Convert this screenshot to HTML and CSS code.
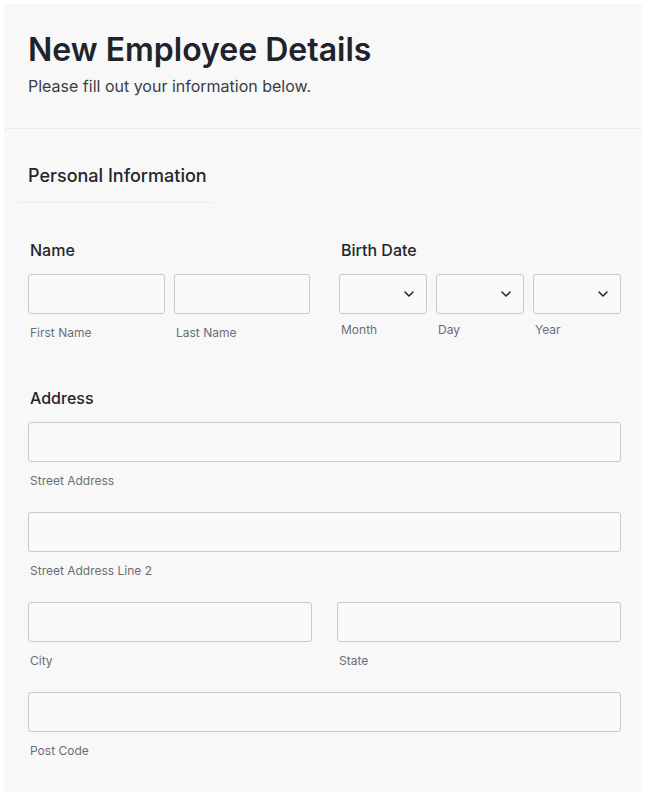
FILE: index.html
```html
<!DOCTYPE html>
<html lang="en">
<head>
<meta charset="utf-8">
<title>New Employee Details</title>
<link rel="stylesheet" href="styles.css">
</head>
<body>
<div class="page">
  <div class="card">
    <header class="head">
      <h1 class="title">New Employee Details</h1>
      <p class="subtitle">Please fill out your information below.</p>
    </header>
    <section class="section">
      <div class="section-head">
        <h2 class="section-title">Personal Information</h2>
      </div>
      <div class="form">
        <div class="pair">
          <div class="group">
            <div class="label">Name</div>
            <div class="inputs two">
              <div class="field">
                <input class="input" type="text">
                <span class="sub">First Name</span>
              </div>
              <div class="field">
                <input class="input" type="text">
                <span class="sub">Last Name</span>
              </div>
            </div>
          </div>
          <div class="group">
            <div class="label">Birth Date</div>
            <div class="inputs three">
              <div class="field">
                <div class="select"><svg class="chev" viewBox="0 0 10 6" width="10" height="6"><path d="M1 1l4 4 4-4" fill="none" stroke="#2a2c33" stroke-width="1.6" stroke-linecap="round" stroke-linejoin="round"/></svg></div>
                <span class="sub sub-tight">Month</span>
              </div>
              <div class="field">
                <div class="select"><svg class="chev" viewBox="0 0 10 6" width="10" height="6"><path d="M1 1l4 4 4-4" fill="none" stroke="#2a2c33" stroke-width="1.6" stroke-linecap="round" stroke-linejoin="round"/></svg></div>
                <span class="sub sub-tight">Day</span>
              </div>
              <div class="field">
                <div class="select"><svg class="chev" viewBox="0 0 10 6" width="10" height="6"><path d="M1 1l4 4 4-4" fill="none" stroke="#2a2c33" stroke-width="1.6" stroke-linecap="round" stroke-linejoin="round"/></svg></div>
                <span class="sub sub-tight">Year</span>
              </div>
            </div>
          </div>
        </div>

        <div class="group address">
          <div class="label">Address</div>
          <div class="field">
            <input class="input" type="text">
            <span class="sub">Street Address</span>
          </div>
          <div class="field spaced">
            <input class="input" type="text">
            <span class="sub">Street Address Line 2</span>
          </div>
          <div class="city-state spaced">
            <div class="field">
              <input class="input" type="text">
              <span class="sub">City</span>
            </div>
            <div class="field">
              <input class="input" type="text">
              <span class="sub">State</span>
            </div>
          </div>
          <div class="field spaced">
            <input class="input" type="text">
            <span class="sub">Post Code</span>
          </div>
        </div>
      </div>
    </section>
  </div>
</div>
</body>
</html>
```
FILE: styles.css
```css
* { box-sizing: border-box; }
html, body { margin: 0; padding: 0; background: #ffffff; }
body { font-family: Inter, "Noto Sans", sans-serif; color: #23262e; }

.page { padding: 4px 8px 8px 4px; }

.card {
  background: #f8f8f8;
  border-radius: 3px;
  height: 788px;
}

.head {
  padding: 27px 24px 32px 24px;
  border-bottom: 1px solid #ececec;
}
.title {
  margin: 0;
  font-size: 32px;
  line-height: 38px;
  font-weight: 600;
  color: #20232b;
  letter-spacing: 0;
}
.subtitle {
  margin: 7px 0 0 0;
  font-size: 16px;
  line-height: 20px;
  color: #3a3d45;
}

.section { padding: 0; }
.section-head {
  margin: 0 0 0 14px;
  width: 194px;
  padding: 36px 0 15px 10px;
  border-bottom: 1px solid #ebebeb;
}
.section-title {
  margin: 0;
  font-size: 18px;
  line-height: 22px;
  font-weight: 500;
  color: #23262e;
}

.form {
  margin-left: 24px;
  width: 593px;
  padding-top: 37px;
}

.pair {
  display: grid;
  grid-template-columns: 282px 282px;
  column-gap: 29px;
}
.group { display: flex; flex-direction: column; }
.label {
  font-size: 16px;
  line-height: 20px;
  font-weight: 500;
  color: #23262e;
  padding-left: 2px;
  margin-bottom: 14px;
}
.inputs { display: grid; column-gap: 9px; }
.inputs.two { grid-template-columns: 137px 136px; }
.inputs.three { grid-template-columns: 88px 88px 88px; }

.field { display: flex; flex-direction: column; }
.input, .select {
  display: block;
  width: 100%;
  height: 40px;
  margin: 0;
  border: 1px solid #c9c9cd;
  border-radius: 3px;
  background: #fafafa;
  font: inherit;
  outline: none;
}
.select {
  display: flex;
  align-items: center;
  justify-content: flex-end;
  padding-right: 12px;
}
.chev { display: block; }

.sub {
  margin-top: 11px;
  font-size: 12px;
  line-height: 16px;
  color: #6b6e75;
  padding-left: 2px;
}
.sub-tight { margin-top: 8px; }

.address { margin-top: 47px; }
.spaced { margin-top: 23px; }
.city-state {
  display: grid;
  grid-template-columns: 284px 284px;
  column-gap: 25px;
}
```
